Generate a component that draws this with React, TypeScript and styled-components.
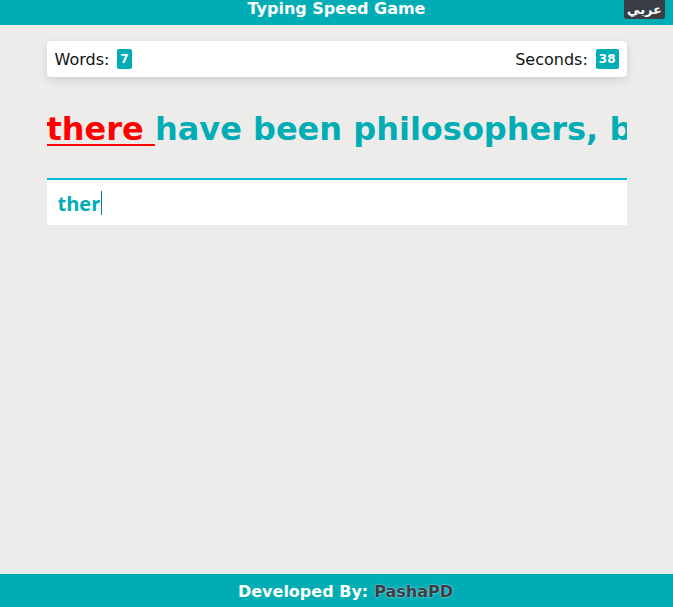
import React from "react";
import styled, { createGlobalStyle } from "styled-components";

const Global = createGlobalStyle`
  html, body { margin: 0; padding: 0; }
  body {
    background: #eeecea;
    font-family: "DejaVu Sans", Verdana, sans-serif;
  }
  * { box-sizing: border-box; }
`;

const Page = styled.div`
  min-height: 100vh;
  display: flex;
  flex-direction: column;
`;

const Header = styled.header`
  position: relative;
  height: 25px;
  background: #00adb5;
  display: flex;
  align-items: center;
  justify-content: center;
`;

const Title = styled.h1`
  margin: 0;
  color: #fff;
  font-size: 16px;
  font-weight: bold;
  line-height: 16px;
  margin-top: -8px;
`;

const LangButton = styled.button`
  position: absolute;
  top: 0;
  right: 8px;
  height: 19px;
  padding: 0 3px;
  border: none;
  border-radius: 0 0 3px 3px;
  background: #393e46;
  color: #fff;
  font-family: "DejaVu Sans", sans-serif;
  font-weight: bold;
  font-size: 13px;
  line-height: 17px;
`;

const Main = styled.main`
  flex: 1;
  width: 580px;
  margin: 0 auto;
  padding-top: 16px;
`;

const StatsCard = styled.div`
  height: 36px;
  background: #fff;
  border-radius: 4px;
  box-shadow: 0 3px 8px rgba(0, 0, 0, 0.12);
  display: flex;
  align-items: center;
  justify-content: space-between;
  padding: 0 8px;
`;

const Stat = styled.div`
  display: flex;
  align-items: center;
  gap: 8px;
  font-size: 16px;
  color: #111;
`;

const Badge = styled.span`
  background: #00adb5;
  color: #fff;
  font-weight: bold;
  font-size: 12px;
  line-height: 20px;
  height: 20px;
  padding: 0 3px;
  border-radius: 2px;
`;

const Sentence = styled.div`
  margin-top: 30px;
  height: 44px;
  white-space: nowrap;
  overflow: hidden;
  font-size: 32px;
  font-weight: bold;
  line-height: 44px;
  color: #00adb5;
`;

const Current = styled.span`
  color: #ff0000;
  text-decoration: underline;
  text-decoration-thickness: 2px;
  text-underline-offset: 4px;
`;

const InputBox = styled.div`
  margin-top: 27px;
  height: 47px;
  background: #fff;
  border-top: 2px solid #00bcd4;
  display: flex;
  align-items: center;
  padding: 1px 11px 0;
  font-family: "Open Sans", "DejaVu Sans", sans-serif;
  font-weight: bold;
  font-size: 20px;
  color: #00adb5;
`;

const Caret = styled.span`
  display: inline-block;
  width: 1px;
  height: 24px;
  background: #00838f;
  margin-left: 1px;
`;

const Footer = styled.footer`
  height: 33px;
  background: #00adb5;
  display: flex;
  align-items: center;
  justify-content: center;
  padding: 2px 0 0 18px;
  color: #fff;
  font-size: 16px;
  font-weight: bold;
`;

const Author = styled.span`
  margin-left: 6px;
  color: #393e46;
  text-shadow: 0 0 2px rgba(255, 255, 255, 0.8);
`;

export default function App() {
  return (
    <Page>
      <Global />
      <Header>
        <Title>Typing Speed Game</Title>
        <LangButton>عربي</LangButton>
      </Header>
      <Main>
        <StatsCard>
          <Stat>
            Words: <Badge>7</Badge>
          </Stat>
          <Stat>
            Seconds: <Badge>38</Badge>
          </Stat>
        </StatsCard>
        <Sentence>
          <Current>there </Current>have been philosophers, but also many others who
        </Sentence>
        <InputBox>
          ther
          <Caret />
        </InputBox>
      </Main>
      <Footer>
        Developed By:<Author>PashaPD</Author>
      </Footer>
    </Page>
  );
}
